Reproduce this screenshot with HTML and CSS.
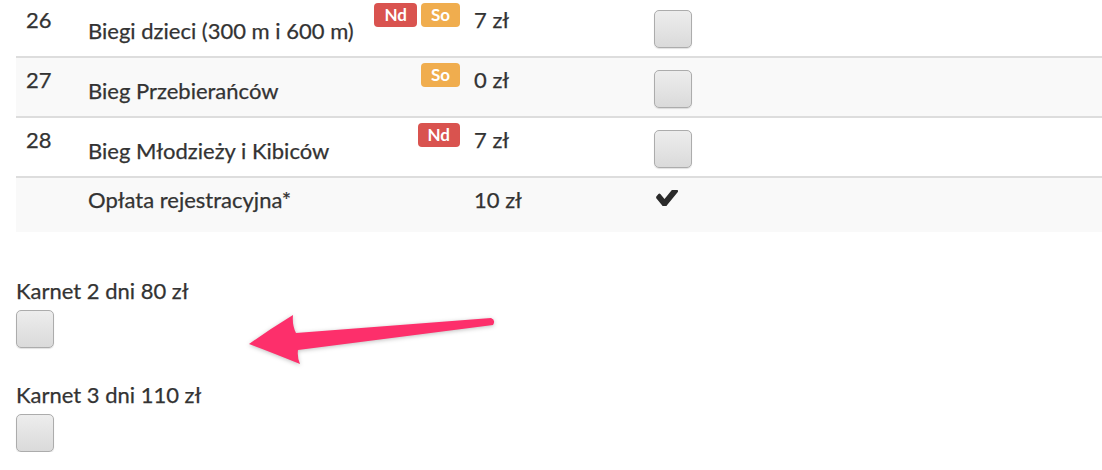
FILE: index.html
```
<!DOCTYPE html>
<html lang="pl"><head>
<meta charset="UTF-8">
<meta name="viewport" content="width=device-width, initial-scale=1.0">
<title>Zapisy - biegi</title>
<link rel="stylesheet" href="styles.css">
</head>
<body>
<div class="page">

<table class="runs">
<colgroup>
<col class="c-no"><col class="c-name"><col class="c-price"><col class="c-pick">
</colgroup>
<tbody>
<tr>
<td class="no">26</td>
<td class="name tagged"><span class="tags"><span class="tag nd">Nd</span><span class="tag so">So</span></span><span class="label">Biegi dzieci (300 m i 600 m)</span></td>
<td class="price">7 zł</td>
<td><input type="checkbox" class="box"></td>
</tr>
<tr class="odd">
<td class="no">27</td>
<td class="name tagged"><span class="tags"><span class="tag so">So</span></span><span class="label">Bieg Przebierańców</span></td>
<td class="price">0 zł</td>
<td><input type="checkbox" class="box"></td>
</tr>
<tr>
<td class="no">28</td>
<td class="name tagged"><span class="tags"><span class="tag nd">Nd</span></span><span class="label">Bieg Młodzieży i Kibiców</span></td>
<td class="price">7 zł</td>
<td><input type="checkbox" class="box"></td>
</tr>
<tr class="odd fee">
<td class="no"></td>
<td class="name"><span class="label">Opłata rejestracyjna*</span></td>
<td class="price">10 zł</td>
<td><svg class="tick" viewBox="113 498 1558 928" preserveAspectRatio="none"><path d="M1671 566q0 40-28 68l-724 724-136 136q-28 28-68 28t-68-28l-136-136-362-362q-28-28-28-68t28-68l136-136q28-28 68-28t68 28l294 295 656-657q28-28 68-28t68 28l136 136q28 28 28 68z"/></svg></td>
</tr>
</tbody>
</table>

<div class="pass">
<div class="pass-title">Karnet 2 dni 80 zł</div>
<input type="checkbox" class="box">
</div>
<div class="pass">
<div class="pass-title">Karnet 3 dni 110 zł</div>
<input type="checkbox" class="box">
</div>

</div>

<!-- annotation arrow drawn over the page -->
<svg class="arrow" width="1102" height="470" viewBox="0 0 1102 470">
<path d="M249,344 Q270,329 293,315 Q292,325 296,333 L491,318 Q496,320 493,325 L298,350 Q297,357 300,364 Q273,353 249,344 Z"/>
</svg>
</body></html>
```

FILE: styles.css
```
body {
    margin: 0;
    background: #fff;
    color: #333;
    font-family: Lato, "Open Sans", sans-serif;
    font-size: 22px;
    line-height: 30px;
    -webkit-text-stroke: 0.25px #333;
}

.page {
    padding-left: 16px;
}

.runs {
    width: 100%;
    table-layout: fixed;
    border-collapse: collapse;
    margin-top: -2px;
    font-size: 22px;
}

.c-no { width: 62px; }
.c-name { width: 386px; }
.c-price { width: 180px; }

.runs tr {
    border-top: 2px solid #ddd;
}

.runs tr:first-child {
    border-top: none;
}

.runs tr.odd {
    background: #f9f9f9;
}

.runs td {
    vertical-align: top;
    padding: 7px 10px 8px 10px;
}

.runs tr.fee td {
    height: 39px;
}

.runs td.name {
    padding-right: 4px;
}

.name.tagged .label {
    display: block;
    padding-top: 11px;
}

.tags {
    float: right;
    display: flex;
    gap: 4px;
    margin-top: -2px;
}

.tag {
    display: inline-block;
    height: 24px;
    line-height: 24px;
    padding: 0 10px;
    border-radius: 4px;
    color: #fff;
    font-size: 17px;
    font-weight: 700;
    -webkit-text-stroke: 0;
}

.tag.nd { background: #d9534f; }
.tag.so { background: #f0ad4e; }

.box {
    -webkit-appearance: none;
    appearance: none;
    display: block;
    width: 38px;
    height: 38px;
    margin: 5px 0 0 0;
    border: 1px solid #acacac;
    border-radius: 5px;
    background: linear-gradient(to bottom, #ededed, #dadada);
    box-shadow: 0 1px 1px rgba(0,0,0,.12);
}

.tick {
    display: block;
    width: 22px;
    height: 16px;
    margin: 5px 0 0 2px;
    fill: #2b2b2b;
}

.pass {
    padding-top: 44px;
}

.pass + .pass {
    padding-top: 32px;
}

.pass .box {
    margin-top: 4px;
}

.arrow {
    position: absolute;
    top: 0;
    left: 0;
    pointer-events: none;
    filter: drop-shadow(0 1px 2px rgba(0,0,0,.25));
}

.arrow path {
    fill: #fd2f6b;
}
```
